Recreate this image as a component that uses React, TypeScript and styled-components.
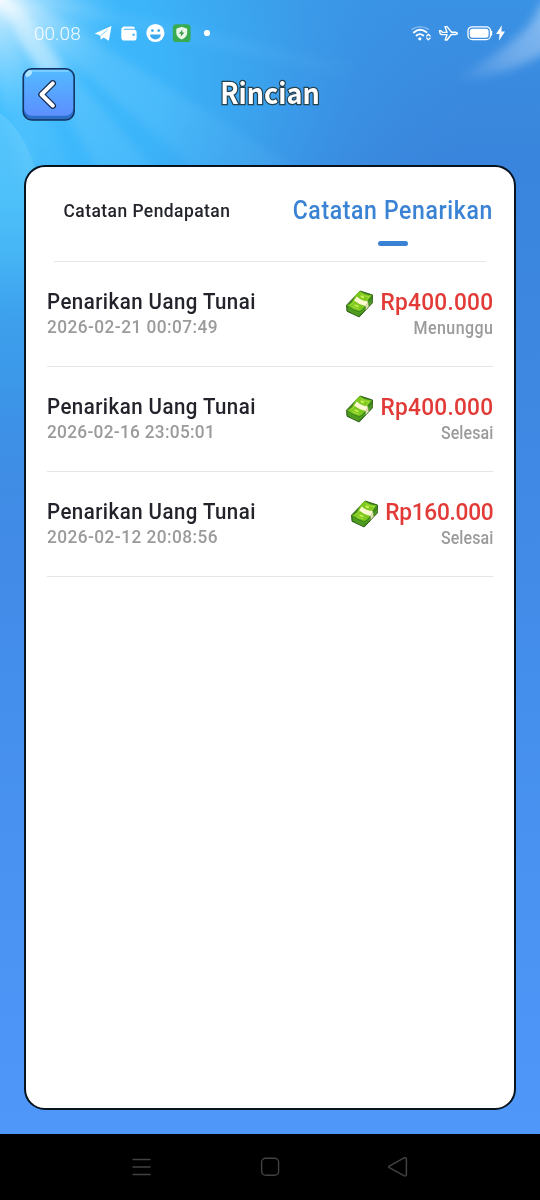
import React from "react";
import styled, { createGlobalStyle } from "styled-components";

const GlobalStyle = createGlobalStyle`
  * { box-sizing: border-box; }
  body { margin: 0; background: #000; }
`;

const Screen = styled.div`
  width: 540px;
  height: 1200px;
  display: flex;
  flex-direction: column;
  font-family: Roboto, "Liberation Sans", sans-serif;
  overflow: hidden;
`;

const Stage = styled.div`
  position: relative;
  isolation: isolate;
  height: 1134px;
  display: flex;
  flex-direction: column;
  overflow: hidden;
`;

const Backdrop = styled.svg`
  position: absolute;
  inset: 0;
  z-index: -1;
`;

const StatusBar = styled.div`
  height: 66px;
  padding: 0 34px;
  display: flex;
  align-items: center;
  justify-content: space-between;
`;

const StatusGroup = styled.div`
  display: flex;
  align-items: center;
`;

const Clock = styled.span`
  color: #fff;
  opacity: 0.92;
  font-size: 19px;
  font-weight: 300;
  width: 60px;
`;

const Header = styled.header`
  height: 58px;
  padding: 0 22px 0;
  display: grid;
  grid-template-columns: 54px 1fr 54px;
  align-items: start;
`;

const BackButton = styled.button`
  width: 54px;
  height: 54px;
  margin-top: 1px;
  padding: 0;
  border: 0;
  background: none;
  display: block;
`;

const Title = styled.h1`
  margin: 0;
  text-align: center;
  font-family: "Noto Sans CJK SC", sans-serif;
  font-weight: 700;
  font-size: 29px;
  line-height: 50px;
  color: #fff;
  -webkit-text-stroke: 2.6px #24414f;
  paint-order: stroke fill;
  transform: scaleX(0.93);
`;

const Card = styled.main`
  margin: 41px 24px 0;
  height: 945px;
  border: 2px solid #07131f;
  border-radius: 21px;
  background: #fff;
`;

const Tabs = styled.div`
  margin: 0 28px;
  height: 95px;
  border-bottom: 1px solid #e6e6e8;
  display: flex;
  justify-content: space-between;
`;

const Tab = styled.div`
  width: 186px;
  padding-top: 24px;
  display: flex;
  flex-direction: column;
  align-items: center;
`;

const TabLabel = styled.span<{ $active?: boolean }>`
  white-space: nowrap;
  line-height: 40px;
  font-weight: 500;
  font-size: ${(p) => (p.$active ? "25px" : "19px")};
  letter-spacing: ${(p) => (p.$active ? "0.7px" : "0.5px")};
  color: ${(p) => (p.$active ? "#3a82d4" : "#23242b")};
  transform: ${(p) => (p.$active ? "scaleX(0.92)" : "scaleX(0.918)")};
`;

const Indicator = styled.i`
  width: 30px;
  height: 5px;
  margin-top: 10px;
  border-radius: 3px;
  background: #3a82d4;
`;

const Row = styled.div`
  margin: 0 21px;
  height: 105px;
  padding-top: 25px;
  border-bottom: 1px solid #e6e6e8;
  display: flex;
  justify-content: space-between;
`;

const Column = styled.div<{ $end?: boolean }>`
  display: flex;
  flex-direction: column;
  align-items: ${(p) => (p.$end ? "flex-end" : "flex-start")};
  white-space: nowrap;
`;

const Name = styled.span`
  font-size: 22.5px;
  height: 30px;
  line-height: 28px;
  font-weight: 500;
  letter-spacing: 0.5px;
  color: #23242b;
  transform: scaleX(0.91);
  transform-origin: left;
`;

const DateText = styled.span<{ $spacing: number }>`
  font-size: 19px;
  line-height: 20px;
  letter-spacing: ${(p) => p.$spacing}px;
  font-weight: 500;
  color: #9b9b9b;
  transform: scaleX(0.908);
  transform-origin: left;
`;

const Amount = styled.span`
  height: 30px;
  display: flex;
  align-items: center;
`;

const AmountText = styled.span<{ $spacing: number }>`
  font-size: 24px;
  line-height: 30px;
  font-weight: 500;
  letter-spacing: ${(p) => p.$spacing}px;
  margin-right: -0.5px;
  color: #e23a37;
  transform: scaleX(0.945);
  transform-origin: right;
`;

const State = styled.span<{ $spacing: number }>`
  font-size: 17.5px;
  line-height: 22px;
  font-weight: 500;
  letter-spacing: ${(p) => p.$spacing}px;
  margin-right: -0.5px;
  color: #9b9b9b;
  transform: scaleX(0.915);
  transform-origin: right;
`;

const NavBar = styled.nav`
  height: 66px;
  background: #000;
  display: flex;
  justify-content: center;
  align-items: center;
  gap: 108px;
`;

const Sky = () => (
  <Backdrop width="540" height="1134" viewBox="0 0 540 1134">
    <defs>
      <linearGradient id="base" x1="0" y1="0" x2="0" y2="1">
        <stop offset="0" stopColor="#3a92e4" />
        <stop offset="0.14" stopColor="#3984dc" />
        <stop offset="0.34" stopColor="#3e88e2" />
        <stop offset="1" stopColor="#4f98fa" />
      </linearGradient>
      <radialGradient id="cyan" gradientUnits="userSpaceOnUse" cx="0" cy="80" r="470">
        <stop offset="0" stopColor="#41bfff" />
        <stop offset="0.35" stopColor="#3cb6fb" stopOpacity="0.95" />
        <stop offset="0.55" stopColor="#3baaf2" stopOpacity="0.75" />
        <stop offset="0.75" stopColor="#3b9cea" stopOpacity="0.4" />
        <stop offset="1" stopColor="#3a8ee2" stopOpacity="0" />
      </radialGradient>
      <linearGradient id="edge" gradientUnits="userSpaceOnUse" x1="0" y1="110" x2="0" y2="380">
        <stop offset="0" stopColor="#43c0fb" stopOpacity="0" />
        <stop offset="0.3" stopColor="#43bcf9" />
        <stop offset="0.52" stopColor="#41b4f5" />
        <stop offset="1" stopColor="#3f88e2" stopOpacity="0" />
      </linearGradient>
      <radialGradient id="sun" gradientUnits="userSpaceOnUse" cx="0" cy="0" r="120">
        <stop offset="0" stopColor="#fff" stopOpacity="0.95" />
        <stop offset="0.25" stopColor="#dff4ff" stopOpacity="0.55" />
        <stop offset="1" stopColor="#8fd8ff" stopOpacity="0" />
      </radialGradient>
      <linearGradient id="ray" gradientUnits="userSpaceOnUse" x1="0" y1="0" x2="190" y2="200">
        <stop offset="0" stopColor="#fff" stopOpacity="0.5" />
        <stop offset="0.3" stopColor="#b8e8ff" stopOpacity="0.2" />
        <stop offset="1" stopColor="#8fd8ff" stopOpacity="0.08" />
      </linearGradient>
      <linearGradient id="haze" x1="0" y1="0" x2="0" y2="1">
        <stop offset="0" stopColor="#8fdcfd" stopOpacity="0.3" />
        <stop offset="1" stopColor="#7fd4fb" stopOpacity="0" />
      </linearGradient>
      <linearGradient id="cloud" gradientUnits="userSpaceOnUse" x1="450" y1="78" x2="550" y2="20">
        <stop offset="0" stopColor="#8dbcf0" stopOpacity="0" />
        <stop offset="0.6" stopColor="#8dbcf0" stopOpacity="0.65" />
        <stop offset="1" stopColor="#9cc8f6" stopOpacity="0.75" />
      </linearGradient>
      <filter id="soft"><feGaussianBlur stdDeviation="5" /></filter>
      <filter id="softer" x="-50%" y="-50%" width="200%" height="200%"><feGaussianBlur stdDeviation="4" /></filter>
    </defs>
    <rect width="540" height="1134" fill="url(#base)" />
    <rect width="540" height="550" fill="url(#cyan)" />
    <rect y="110" width="36" height="270" fill="url(#edge)" />
    <g filter="url(#soft)" fill="url(#ray)">
      <path d="M0 0 L30 0 L330 190 L220 190Z" />
      <path d="M0 0 L12 0 L170 190 L110 190Z" />
      <path d="M20 0 L60 0 L360 66 L330 74Z" opacity="0.5" />
      <path d="M0 10 L80 190 L24 190 L-10 40Z" opacity="0.5" />
    </g>
    <path filter="url(#softer)" d="M0 0 L22 8 L64 68 L42 74 L18 40Z" fill="#e6f7ff" opacity="0.5" />
    <path d="M0 113 Q28 135 36 175 L36 300 L0 300Z" fill="url(#haze)" />
    <rect width="140" height="140" fill="url(#sun)" />
    <path filter="url(#soft)" d="M450 80 Q505 53 530 24 L544 0 L560 0 L550 50 Q505 78 450 80Z" fill="url(#cloud)" />
  </Backdrop>
);

const NotificationIcons = () => (
  <svg width="120" height="26" viewBox="94 20 120 26">
    <path d="M94.7 33.6 L111.5 26 L108.8 40.8 L103.6 37.4 L100.8 39.8 L100.3 35.6Z" fill="#fff" />
    <path d="M100.9 35.6 L107.6 29.8" stroke="#5cc4fb" strokeWidth="0.8" />
    <path d="M121.3 30 q0-3.5 3.5-3.5 h7.2 q3 0 3 2.2 h-10.5 q-.7 0-.7 .5 t.7 .5 h9.5 q2.6 0 2.6 2.8 v4.9 q0 3.2-3.2 3.2 h-9 q-3.1 0-3.1-3.1Z" fill="#fff" />
    <circle cx="133.6" cy="34.8" r="1.3" fill="#4ebcf8" />
    <circle cx="155.4" cy="33" r="9.1" fill="#fff" />
    <path d="M150 34.4 h10.8 a5.4 5 0 0 1-10.8 0Z" fill="#3ba9ee" />
    <circle cx="152.4" cy="30.6" r="1.4" fill="#3ba9ee" />
    <circle cx="158.7" cy="30.6" r="1.4" fill="#3ba9ee" />
    <rect x="172.8" y="24.2" width="17.8" height="17.8" rx="3.6" fill="#38ab50" />
    <path d="M181.7 26.8 L187.2 28.8 V33 Q187 37 181.7 39.6 Q176.5 37 176.3 33 V28.8Z" fill="#e9f8e7" />
    <path d="M182.5 29.5 L178.9 33.7 H181.2 L180.6 36.7 L184.4 32.4 H182Z" fill="#38924a" />
    <circle cx="207" cy="33" r="3.1" fill="#fff" />
  </svg>
);

const SystemIcons = () => (
  <svg width="98" height="24" viewBox="408 21 98 24" fill="none" stroke="#fff" strokeLinecap="round" strokeLinejoin="round">
    <path d="M412.2 29.2 Q420.2 24.3 428.2 29.2" strokeWidth="1.7" opacity="0.35" />
    <path d="M413.8 32.4 Q420 27.4 426.5 32.2" strokeWidth="1.9" />
    <path d="M416.5 35.5 Q419.8 32.7 423.3 35.5" strokeWidth="1.8" />
    <circle cx="419.8" cy="38.8" r="1.6" fill="#fff" stroke="none" />
    <path d="M426.7 36 l1.7-1.9 l1.7 1.9 M426.7 38 l1.7 1.9 l1.7-1.9" strokeWidth="1.2" />
    <path d="M439.5 30.8 H441 L442.7 32.4 H447 L445 26.6 H447 L451.6 32.2 H455.5 Q457.4 32.8 457.4 33.5 Q457.2 34.4 455 34.5 H451.2 L447 40 H445.2 L447 34.6 H441.6 L440.2 33.6Z" strokeWidth="1.4" />
    <rect x="468" y="26.8" width="22.5" height="12.8" rx="4.2" strokeWidth="1.3" />
    <rect x="469.8" y="28.7" width="18.8" height="9" rx="2.6" fill="#fff" stroke="none" />
    <path d="M491.6 31.2 v4" strokeWidth="1.2" />
    <path d="M501.8 25.2 L496 34 H499.5 L498.9 40.8 L505 31.6 H501.4Z" fill="#fff" stroke="none" />
  </svg>
);

const BackIcon = () => (
  <svg width="54" height="54" viewBox="22 67 54 54" display="block">
    <defs>
      <linearGradient id="face" x1="0" y1="0" x2="0" y2="1">
        <stop offset="0" stopColor="#53baff" />
        <stop offset="1" stopColor="#5c8fff" />
      </linearGradient>
    </defs>
    <rect x="23.2" y="68.7" width="51" height="51.3" rx="8.5" fill="#2c6fc9" stroke="#12335f" strokeWidth="1.5" />
    <rect x="24.2" y="69.7" width="49" height="46" rx="7.5" fill="url(#face)" />
    <path d="M29 71 H68" stroke="#86d5ff" strokeWidth="1.4" strokeLinecap="round" />
    <ellipse cx="28.8" cy="73.6" rx="3.8" ry="2.4" transform="rotate(-42 28.8 73.6)" fill="#b9e9ff" opacity="0.9" />
    <path d="M52.8 83.3 L41.5 94.5 L52.8 105.7" fill="none" stroke="#152a4d" strokeWidth="6.4" strokeLinecap="round" strokeLinejoin="round" />
    <path d="M52.8 83.3 L41.5 94.5 L52.8 105.7" fill="none" stroke="#fff" strokeWidth="4" strokeLinecap="round" strokeLinejoin="round" />
  </svg>
);

const CashDrawing = styled.svg`
  margin: 2px 0 -2px;
`;

const CashIcon = () => (
  <CashDrawing width="29" height="30" viewBox="0 0 29 30">
    <path d="M1.5 16.2 L15.2 2 L27.5 6 L27.3 14 L14.2 28 L2 22.3Z" fill="#3f8c1c" stroke="#28580f" strokeWidth="0.9" strokeLinejoin="round" />
    <path d="M1.8 16 Q7 15.5 8.8 9.4 Q11.5 3.3 15.3 2.2 Q20 6.3 27 6.2 Q23.5 8.5 21.3 14.5 Q18.5 20.6 14.3 22 Q8 20.7 1.8 16Z" fill="#7cc81f" />
    <path d="M5 16 Q9 14.5 10.5 10 M16 4.5 Q20 8 24.5 7.7 Q22 10 20.5 13 M14 20 Q10 19.3 7 17.3" fill="none" stroke="#a9de3c" strokeWidth="1" />
    <path d="M14.8 6.8 q2.3-1 4.6 1 l-1 1.8 q-2-.2-3.6-2.8Z M8.5 15.8 q3-.8 5.6 1.7 q-2 1.6-5.6-1.7Z" fill="#c9ee55" />
    <path d="M9.2 11.4 Q14 15.6 20.6 17 L23 12.6 Q16.5 12 11.8 7.6Z" fill="#fff8d5" />
    <path d="M20.6 17 L23 12.6 L23.6 17.5 L20.6 21Z" fill="#e3ddb2" />
    <path d="M3 18.6 Q8 22.8 14.2 24.3 Q18 22.5 20 20 M24.4 15.4 L27 11.6 M3 20.5 Q8 24.5 14 26.2" fill="none" stroke="#65ae27" strokeWidth="0.8" />
  </CashDrawing>
);

const records = [
  { date: "2026-02-21 00:07:49", dateSpacing: 0.5, amount: "Rp400.000", spacing: 0.25, state: "Menunggu", stateSpacing: 0.5 },
  { date: "2026-02-16 23:05:01", dateSpacing: 0.33, amount: "Rp400.000", spacing: 0.25, state: "Selesai", stateSpacing: 0.1 },
  { date: "2026-02-12 20:08:56", dateSpacing: 0.5, amount: "Rp160.000", spacing: -0.3, state: "Selesai", stateSpacing: 0.1 },
];

export default function App() {
  return (
    <Screen>
      <GlobalStyle />
      <Stage>
        <Sky />
        <StatusBar>
          <StatusGroup>
            <Clock>00.08</Clock>
            <NotificationIcons />
          </StatusGroup>
          <SystemIcons />
        </StatusBar>
        <Header>
          <BackButton aria-label="Kembali"><BackIcon /></BackButton>
          <Title>Rincian</Title>
        </Header>
        <Card>
          <Tabs>
            <Tab>
              <TabLabel>Catatan Pendapatan</TabLabel>
            </Tab>
            <Tab>
              <TabLabel $active>Catatan Penarikan</TabLabel>
              <Indicator />
            </Tab>
          </Tabs>
          {records.map((r) => (
            <Row key={r.date}>
              <Column>
                <Name>Penarikan Uang Tunai</Name>
                <DateText $spacing={r.dateSpacing}>{r.date}</DateText>
              </Column>
              <Column $end>
                <Amount>
                  <CashIcon />
                  <AmountText $spacing={r.spacing}>{r.amount}</AmountText>
                </Amount>
                <State $spacing={r.stateSpacing}>{r.state}</State>
              </Column>
            </Row>
          ))}
        </Card>
      </Stage>
      <NavBar>
        <svg width="20" height="20" viewBox="0 0 20 20" stroke="#424242" strokeWidth="1.5">
          <path d="M0.5 2.5 H18.5 M0.5 10 H18.5 M0.5 17.5 H18.5" />
        </svg>
        <svg width="20" height="20" viewBox="0 0 20 20" fill="none" stroke="#424242" strokeWidth="1.4">
          <rect x="1.6" y="1.3" width="17" height="17" rx="4" />
        </svg>
        <svg width="20" height="20" viewBox="0 0 20 20" fill="none" stroke="#424242" strokeWidth="1.5">
          <path d="M1.3 9.2 L16 0.9 Q18.4 0 18.4 2.3 V17 Q18.4 19.6 16 18.6 L1.3 10.7 Q0.2 10 1.3 9.2Z" />
        </svg>
      </NavBar>
    </Screen>
  );
}
